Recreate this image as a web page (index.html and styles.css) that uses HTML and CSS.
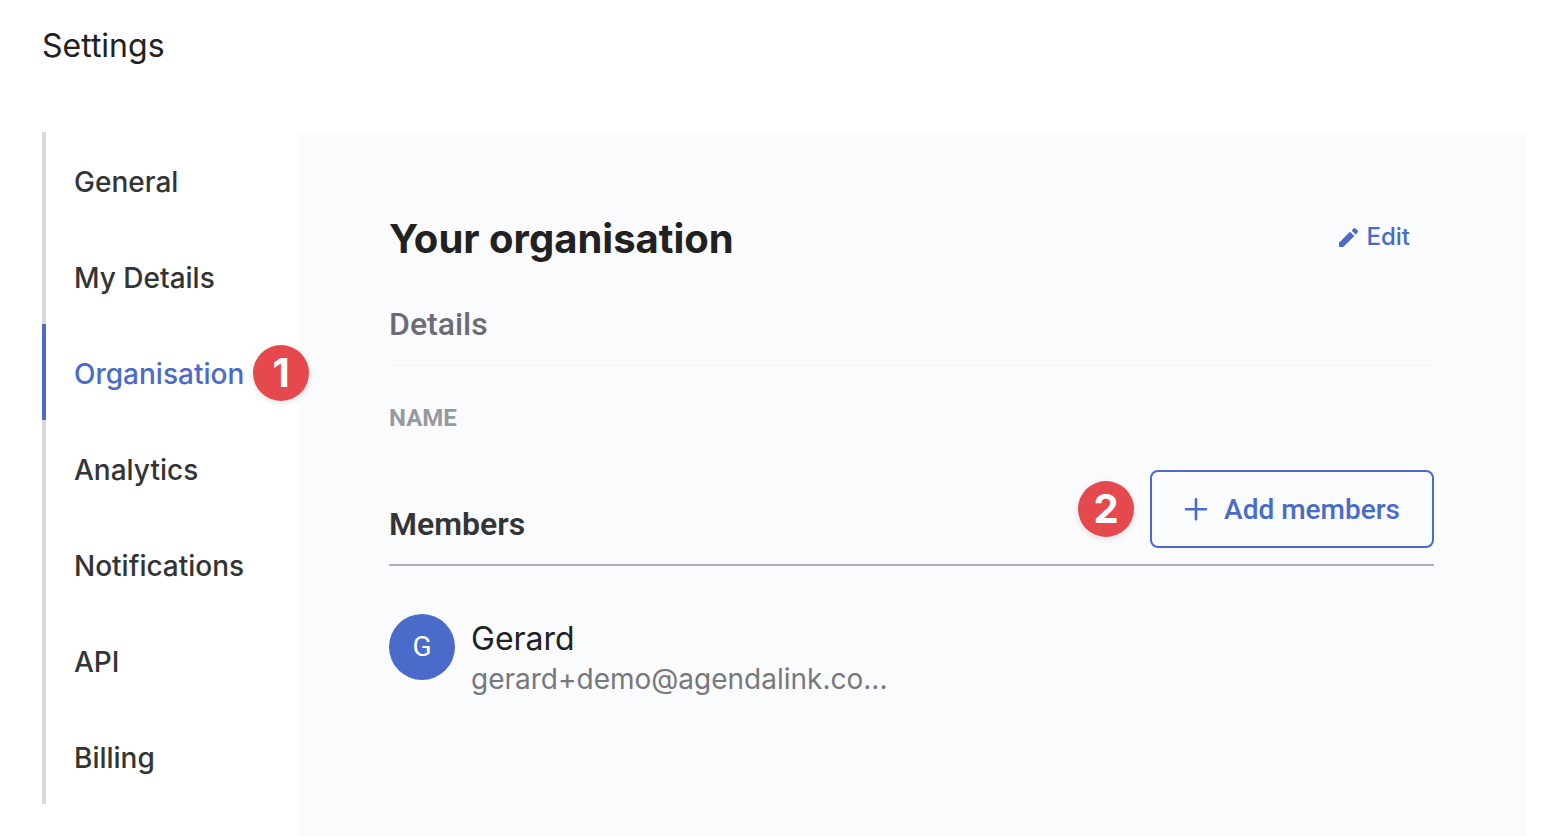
FILE: index.html
```html
<!DOCTYPE html>
<html lang="en-GB">
<head>
<meta charset="utf-8">
<meta name="viewport" content="width=device-width, initial-scale=1">
<title>Settings</title>
<link rel="stylesheet" href="styles.css">
</head>
<body>
<header class="page-header">
  <h1 class="page-title">Settings</h1>
</header>
<div class="layout">
  <nav class="side-nav" aria-label="Settings">
    <a class="nav-link" href="#general">General</a>
    <a class="nav-link" href="#details">My Details</a>
    <a class="nav-link nav-link-active" href="#organisation" aria-current="page">Organisation<span class="step step-nav">1</span></a>
    <a class="nav-link" href="#analytics">Analytics</a>
    <a class="nav-link" href="#notifications">Notifications</a>
    <a class="nav-link" href="#api">API</a>
    <a class="nav-link" href="#billing">Billing</a>
  </nav>
  <main class="panel">
    <div class="panel-head">
      <h2 class="panel-title">Your organisation</h2>
      <button class="edit-button" type="button">
        <svg class="edit-icon" viewBox="3 3 18 18" aria-hidden="true"><path d="M3 17V21h4L17.500 10.500l-4-4L3 17zM20.710 7.040a1 1 0 0 0 0-1.410l-2.340-2.340a1 1 0 0 0-1.410 0l-2 2 4 4 1.750-2.250z"/></svg>
        Edit
      </button>
    </div>
    <h3 class="section-title details-title">Details</h3>
    <h4 class="field-label">NAME</h4>
    <div class="members-head">
      <h3 class="section-title members-title">Members</h3>
      <div class="members-actions">
        <span class="step">2</span>
        <button class="add-button" type="button">
          <svg class="add-icon" viewBox="0 0 24 24" aria-hidden="true"><path d="M12 2.200v20M2 12.200h20"/></svg>
          Add members
        </button>
      </div>
    </div>
    <div class="member">
      <span class="avatar">G</span>
      <div class="member-text">
        <div class="member-name">Gerard</div>
        <div class="member-email">gerard+demo@agendalink.co...</div>
      </div>
    </div>
  </main>
</div>
</body>
</html>
```
FILE: styles.css
```css
* {
  box-sizing: border-box;
}

body {
  margin: 0;
  min-height: 100vh;
  display: flex;
  flex-direction: column;
  background: #fff;
  color: #212121;
  font-family: Inter, "Liberation Sans", sans-serif;
}

h1, h2, h3, h4 {
  margin: 0;
}

button {
  font: inherit;
  cursor: pointer;
}

.page-header {
  padding: 26px 42px 66px;
}

.page-title {
  font-size: 32px;
  font-weight: 400;
  line-height: 40px;
}

.layout {
  flex: 1;
  display: grid;
  grid-template-columns: 255px 1fr;
  padding: 0 38px 0 42px;
}

.side-nav {
  display: flex;
  flex-direction: column;
}

.nav-link {
  display: flex;
  align-items: center;
  height: 96px;
  padding: 4px 0 0 28px;
  border-left: 4px solid #d8d8dc;
  color: #333436;
  font-size: 28px;
  font-weight: 500;
  line-height: 36px;
  text-decoration: none;
}

.nav-link-active {
  position: relative;
  border-left-color: #4a6bc9;
  color: #4a6bc9;
}

.step {
  flex: none;
  width: 56px;
  height: 56px;
  border-radius: 50%;
  background: #e5484d;
  box-shadow: 0 2px 6px rgba(0, 0, 0, 0.12);
  color: #fff;
  font-size: 40px;
  font-weight: 700;
  line-height: 56px;
  text-align: center;
}

.step-nav {
  position: absolute;
  top: 21px;
  right: -12px;
}

.panel {
  padding: 83px 92px 48px;
  background: #fafbfd;
}

.panel-head {
  display: flex;
  align-items: center;
  justify-content: space-between;
}

.panel-title {
  font-size: 40px;
  font-weight: 700;
  line-height: 48px;
}

.edit-button {
  display: flex;
  align-items: center;
  gap: 8px;
  padding: 0 24px 4px;
  border: 0;
  background: none;
  color: #4a6bc9;
  font-size: 24px;
  font-weight: 500;
  line-height: 32px;
}

.edit-icon {
  width: 19px;
  height: 19px;
  fill: currentColor;
}

.section-title {
  color: #333436;
  font-family: Roboto, sans-serif;
  font-size: 32px;
  font-weight: 600;
  line-height: 40px;
}

.details-title {
  padding: 41px 0 20px;
  border-bottom: 2px solid #f6f7f9;
  color: #6b6c75;
  font-weight: 500;
}

.field-label {
  padding: 36px 0;
  color: #98999f;
  font-family: Roboto, sans-serif;
  font-size: 24px;
  font-weight: 700;
  line-height: 32px;
}

.members-head {
  display: flex;
  align-items: flex-end;
  justify-content: space-between;
  padding-bottom: 16px;
  border-bottom: 2px solid #adaeb6;
}

.members-title {
  padding-bottom: 4px;
}

.members-actions {
  display: flex;
  align-items: center;
  gap: 16px;
}

.add-button {
  display: flex;
  align-items: center;
  gap: 16px;
  height: 78px;
  padding: 0 32px;
  border: 2px solid #4a6bc9;
  border-radius: 8px;
  background: none;
  color: #4a6bc9;
  font-family: Roboto, sans-serif;
  font-size: 28px;
  font-weight: 500;
}

.add-icon {
  width: 24px;
  height: 24px;
  fill: none;
  stroke: currentColor;
  stroke-width: 2.6;
  stroke-linecap: round;
}

.member {
  display: flex;
  gap: 16px;
  padding-top: 48px;
}

.avatar {
  flex: none;
  width: 66px;
  height: 66px;
  border-radius: 50%;
  background: #4a6bc9;
  color: #fff;
  font-family: Roboto, sans-serif;
  font-size: 28px;
  line-height: 66px;
  text-align: center;
}

.member-text {
  padding-top: 5px;
}

.member-name {
  font-size: 32px;
  line-height: 40px;
}

.member-email {
  color: #77787b;
  font-size: 28px;
  line-height: 40px;
}
```
